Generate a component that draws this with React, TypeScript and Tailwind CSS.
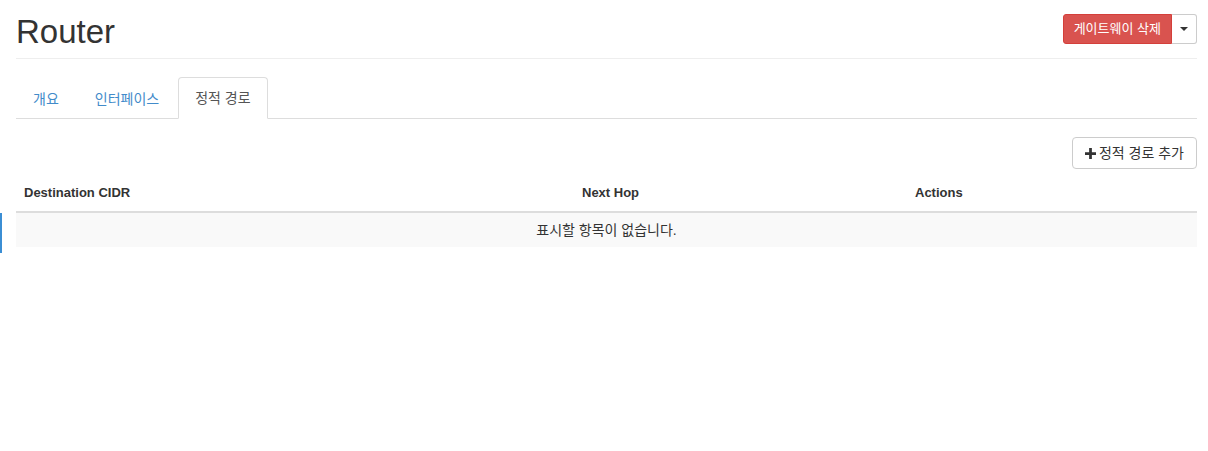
import React from "react";

export default function App() {
  const font = { fontFamily: '"Liberation Sans", "Noto Sans CJK KR", Arial, sans-serif' };
  return (
    <div className="relative w-[1208px] h-[451px] bg-white text-[14px] text-[#333]" style={font}>
      <div className="absolute left-0 top-[213px] w-[2px] h-[40px] bg-[#3b8ed4]" />
      <div className="px-[16px] pr-[11px]">
        <div className="flex items-start justify-between border-b border-[#eee] pt-[14px] pb-[8px]">
          <h1 className="text-[33px] leading-[36px] font-normal text-[#333]">Router</h1>
          <div className="flex">
            <button className="h-[30px] px-[10px] bg-[#d9534f] border border-[#d43f3a] text-white text-[13px] rounded-l-[3px] leading-[20px]">
              게이트웨이 삭제
            </button>
            <button className="h-[30px] w-[25px] bg-white border border-[#ccc] border-l-0 rounded-r-[3px] flex items-center justify-center">
              <span className="block w-0 h-0 border-l-[4px] border-r-[4px] border-t-[4px] border-l-transparent border-r-transparent border-t-[#333]" />
            </button>
          </div>
        </div>

        <div className="mt-[18px] flex border-b border-[#ddd] h-[42px]">
          <a className="px-[16px] pt-[11px] mr-[2px] text-[#428bca] leading-[20px] border border-transparent">개요</a>
          <a className="px-[16px] pt-[11px] mr-[2px] text-[#428bca] leading-[20px] border border-transparent">인터페이스</a>
          <a className="px-[16px] pt-[10px] mr-[2px] text-[#555] leading-[20px] border border-[#ddd] border-b-white rounded-t-[4px] bg-white h-[42px] relative">
            정적 경로
          </a>
        </div>

        <div className="flex justify-end mt-[18px]">
          <button className="h-[32px] px-[12px] border border-[#ccc] rounded-[4px] bg-white text-[#333] text-[14px] flex items-center gap-[3px]">
            <svg width="11" height="11" viewBox="0 0 12 12"><path d="M4.5 0h3v4.5H12v3H7.5V12h-3V7.5H0v-3h4.5z" fill="#333" /></svg>
            정적 경로 추가
          </button>
        </div>

        <table className="w-full mt-[6px] border-collapse text-[13px]">
          <thead>
            <tr className="border-b-2 border-[#ddd]">
              <th className="text-left font-bold px-[8px] py-[8px] leading-[20px] w-[558px]">Destination CIDR</th>
              <th className="text-left font-bold px-[8px] py-[8px] leading-[20px] w-[333px]">Next Hop</th>
              <th className="text-left font-bold px-[8px] py-[8px] leading-[20px]">Actions</th>
            </tr>
          </thead>
          <tbody>
            <tr className="bg-[#f9f9f9]">
              <td colSpan={3} className="text-center px-[8px] py-[7px] leading-[20px] text-[14px]">
                표시할 항목이 없습니다.
              </td>
            </tr>
          </tbody>
        </table>
      </div>
    </div>
  );
}
